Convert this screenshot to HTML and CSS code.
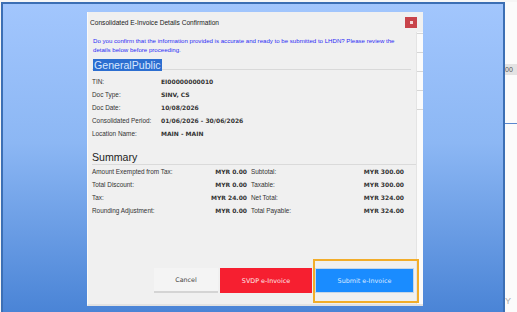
FILE: index.html
```html
<!DOCTYPE html>
<html lang="en">
<head>
    <meta charset="UTF-8">
    <title>Consolidated E-Invoice Details Confirmation</title>
    <link rel="stylesheet" href="styles.css">
</head>
<body>
    <div class="screen">
        <div class="window">
            <div class="dialog">
                <div class="titlebar">
                    <span class="title">Consolidated E-Invoice Details Confirmation</span>
                    <button class="close"><span></span></button>
                </div>
                <div class="dialog-body">
                    <div class="main">
                        <p class="message">Do you confirm that the information provided is accurate and ready to be submitted to LHDN? Please review the details below before proceeding.</p>
                        <div class="customer"><span>GeneralPublic</span></div>
                        <div class="details">
                            <div class="row"><span class="label">TIN:</span><span class="value">EI00000000010</span></div>
                            <div class="row"><span class="label">Doc Type:</span><span class="value">SINV, CS</span></div>
                            <div class="row"><span class="label">Doc Date:</span><span class="value">10/08/2026</span></div>
                            <div class="row"><span class="label">Consolidated Period:</span><span class="value">01/06/2026 - 30/06/2026</span></div>
                            <div class="row"><span class="label">Location Name:</span><span class="value">MAIN - MAIN</span></div>
                        </div>
                        <h2 class="summary-title">Summary</h2>
                        <div class="summary">
                            <span class="s-label">Amount Exempted from Tax:</span><span class="s-value">MYR 0.00</span>
                            <span class="s-label">Subtotal:</span><span class="s-value">MYR 300.00</span>
                            <span class="s-label">Total Discount:</span><span class="s-value">MYR 0.00</span>
                            <span class="s-label">Taxable:</span><span class="s-value">MYR 300.00</span>
                            <span class="s-label">Tax:</span><span class="s-value">MYR 24.00</span>
                            <span class="s-label">Net Total:</span><span class="s-value">MYR 324.00</span>
                            <span class="s-label">Rounding Adjustment:</span><span class="s-value">MYR 0.00</span>
                            <span class="s-label">Total Payable:</span><span class="s-value">MYR 324.00</span>
                        </div>
                        <div class="actions">
                            <button class="btn cancel">Cancel</button>
                            <button class="btn svdp">SVDP e-Invoice</button>
                            <button class="btn submit">Submit e-Invoice</button>
                            <div class="focus-mark"></div>
                        </div>
                    </div>
                    <div class="edge">
                        <div class="edge-line"></div>
                        <div class="edge-line"></div>
                        <div class="edge-line"></div>
                        <div class="edge-line"></div>
                        <div class="edge-line"></div>
                    </div>
                </div>
            </div>
        </div>
        <div class="side">
            <div class="side-band">00</div>
            <div class="side-line"></div>
            <div class="side-letter">Y</div>
        </div>
    </div>
</body>
</html>
```

FILE: styles.css
```css
html, body {
    margin: 0;
    height: 312px;
    overflow: hidden;
}

body {
    background: #f6f6f6;
    font-family: "Liberation Sans", Arial, sans-serif;
}

.screen {
    display: flex;
    padding-top: 2px;
    height: 310px;
    overflow: hidden;
}

.window {
    margin-left: 1px;
    width: 504px;
    height: 310px;
    flex-shrink: 0;
    border: 2px solid #3c6fb4;
    border-bottom: none;
    background: linear-gradient(#a2c6fd, #8cb7f4 45%, #4a84d6);
    padding: 8px 0 0 84px;
    box-sizing: border-box;
}

.dialog {
    width: 335px;
    height: 292px;
    background: #f0f0f0;
    border-left: 1px solid #fafafa;
    border-bottom: 2px solid #e2e2e2;
    display: flex;
    flex-direction: column;
}

.titlebar {
    height: 20px;
    display: flex;
    align-items: center;
    justify-content: space-between;
    padding: 0 6px 0 2px;
    flex-shrink: 0;
}

.title {
    font-size: 6.6px;
    color: #1a1a1a;
}

.close {
    width: 12px;
    height: 11px;
    border: none;
    padding: 0;
    background: #c8434a;
    display: flex;
    align-items: center;
    justify-content: center;
    margin-top: 1px;
}

.close span {
    width: 3px;
    height: 3px;
    background: #f4d7d8;
}

.dialog-body {
    flex: 1;
    display: flex;
}

.main {
    width: 329px;
    padding: 4px 0 0 4px;
    box-sizing: border-box;
}

.message {
    margin: 0;
    padding-left: 1px;
    width: 316px;
    font-size: 6.1px;
    line-height: 9px;
    color: #2b2bf5;
}

.customer {
    margin-top: 1px;
    height: 12px;
    padding-left: 1px;
    padding-bottom: 2px;
    border-bottom: 1px solid #d9d9d9;
    margin-right: 5px;
}

.customer span {
    display: inline-block;
    height: 12px;
    line-height: 12px;
    font-size: 10.6px;
    background: #2c6ed0;
    color: #d8e7ff;
    padding: 0 1px;
}

.details {
    padding-top: 5px;
}

.row {
    display: flex;
    height: 13px;
    align-items: center;
}

.label,
.s-label {
    font-size: 6.4px;
    color: #333;
}

.label {
    width: 69px;
}

.value,
.s-value {
    font-family: "DejaVu Sans", Verdana, sans-serif;
    font-weight: bold;
    font-size: 6px;
    color: #333;
}

.summary-title {
    margin: 11px 0 0;
    font-size: 10.6px;
    font-weight: normal;
    color: #222;
    height: 12px;
    line-height: 12px;
    padding-bottom: 1px;
    border-bottom: 1px solid #dadada;
    margin-right: -2px;
}

.summary {
    display: grid;
    grid-template-columns: 90px 65px 70px 87px;
    grid-auto-rows: 13px;
    align-items: center;
}

.s-value {
    text-align: right;
}

.s-label:nth-child(4n+3) {
    padding-left: 4px;
}

.actions {
    position: relative;
    display: flex;
    gap: 2px;
    margin-top: 51px;
    padding-left: 62px;
    height: 25px;
}

.btn {
    height: 25px;
    border: none;
    padding: 0;
    font-family: "DejaVu Sans", Verdana, sans-serif;
    font-size: 6.4px;
}

.cancel {
    width: 64px;
    background: #f4f4f4;
    color: #444;
    border-bottom: 2px solid #d4d4d4;
}

.svdp {
    width: 92px;
    background: #f61f30;
    color: #fde6e8;
}

.submit {
    width: 99px;
    margin-left: 1px;
    background: #1a8cff;
    color: #dbe9ff;
    border: 1px solid #c7d6e6;
}

.focus-mark {
    position: absolute;
    left: 221px;
    top: -9px;
    width: 102px;
    height: 40px;
    border: 2px solid #f2ad2a;
}

.edge {
    width: 6px;
    background: #fbfbfb;
    border-left: 1px solid #e4e4e4;
    display: flex;
    flex-direction: column;
    gap: 18px;
    padding-top: 1px;
}

.edge-line {
    height: 1px;
    background: #d6d6d6;
}

.side {
    flex: 1;
    height: 310px;
    background: #fbfbfb;
}

.side-band {
    margin-top: 62px;
    height: 11px;
    background: #e3e3e3;
    font-size: 7px;
    line-height: 11px;
    color: #555;
    overflow: hidden;
}

.side-line {
    margin-top: 48px;
    height: 1px;
    background: #5a88cf;
}

.side-letter {
    margin-top: 172px;
    font-size: 9px;
    color: #aaa;
}
```
